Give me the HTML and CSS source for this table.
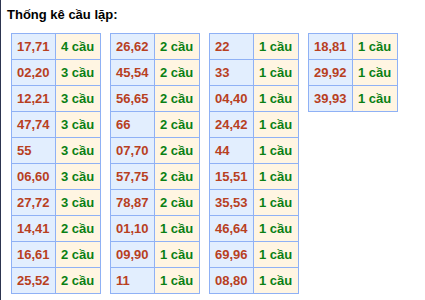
FILE: index.html
```html
<!DOCTYPE html>
<html lang="vi">
<head>
<meta charset="utf-8">
<link rel="stylesheet" href="styles.css">
</head>
<body>
<div class="page">
  <div class="title">Thống kê cầu lặp:</div>
  <div class="tables">
    <table class="stat">
      <tr><td class="num">17,71</td><td class="cnt">4 cầu</td></tr>
      <tr><td class="num">02,20</td><td class="cnt">3 cầu</td></tr>
      <tr><td class="num">12,21</td><td class="cnt">3 cầu</td></tr>
      <tr><td class="num">47,74</td><td class="cnt">3 cầu</td></tr>
      <tr><td class="num">55</td><td class="cnt">3 cầu</td></tr>
      <tr><td class="num">06,60</td><td class="cnt">3 cầu</td></tr>
      <tr><td class="num">27,72</td><td class="cnt">3 cầu</td></tr>
      <tr><td class="num">14,41</td><td class="cnt">2 cầu</td></tr>
      <tr><td class="num">16,61</td><td class="cnt">2 cầu</td></tr>
      <tr><td class="num">25,52</td><td class="cnt">2 cầu</td></tr>
    </table>
    <table class="stat">
      <tr><td class="num">26,62</td><td class="cnt">2 cầu</td></tr>
      <tr><td class="num">45,54</td><td class="cnt">2 cầu</td></tr>
      <tr><td class="num">56,65</td><td class="cnt">2 cầu</td></tr>
      <tr><td class="num">66</td><td class="cnt">2 cầu</td></tr>
      <tr><td class="num">07,70</td><td class="cnt">2 cầu</td></tr>
      <tr><td class="num">57,75</td><td class="cnt">2 cầu</td></tr>
      <tr><td class="num">78,87</td><td class="cnt">2 cầu</td></tr>
      <tr><td class="num">01,10</td><td class="cnt">1 cầu</td></tr>
      <tr><td class="num">09,90</td><td class="cnt">1 cầu</td></tr>
      <tr><td class="num">11</td><td class="cnt">1 cầu</td></tr>
    </table>
    <table class="stat">
      <tr><td class="num">22</td><td class="cnt">1 cầu</td></tr>
      <tr><td class="num">33</td><td class="cnt">1 cầu</td></tr>
      <tr><td class="num">04,40</td><td class="cnt">1 cầu</td></tr>
      <tr><td class="num">24,42</td><td class="cnt">1 cầu</td></tr>
      <tr><td class="num">44</td><td class="cnt">1 cầu</td></tr>
      <tr><td class="num">15,51</td><td class="cnt">1 cầu</td></tr>
      <tr><td class="num">35,53</td><td class="cnt">1 cầu</td></tr>
      <tr><td class="num">46,64</td><td class="cnt">1 cầu</td></tr>
      <tr><td class="num">69,96</td><td class="cnt">1 cầu</td></tr>
      <tr><td class="num">08,80</td><td class="cnt">1 cầu</td></tr>
    </table>
    <table class="stat">
      <tr><td class="num">18,81</td><td class="cnt">1 cầu</td></tr>
      <tr><td class="num">29,92</td><td class="cnt">1 cầu</td></tr>
      <tr><td class="num">39,93</td><td class="cnt">1 cầu</td></tr>
    </table>
  </div>
</div>
</body>
</html>
```
FILE: styles.css
```css
html, body {
  margin: 0;
  padding: 0;
  background: #ffffff;
}
body {
  font-family: "Liberation Sans", Arial, sans-serif;
}
.page {
  border-left: 1px solid #2d3550;
  padding: 7px 0 0 6px;
  min-height: 300px;
  box-sizing: border-box;
}
.title {
  font-size: 13px;
  font-weight: bold;
  color: #000;
  line-height: 16px;
  margin-bottom: 10px;
}
.tables {
  display: flex;
  align-items: flex-start;
  gap: 9px;
  padding-left: 4px;
}
.stat {
  border-collapse: collapse;
  width: 90px;
  table-layout: fixed;
}
.stat td {
  border: 1px solid #8fb1f5;
  height: 26px;
  padding: 0 0 0 5px;
  font-size: 13px;
  font-weight: bold;
  box-sizing: border-box;
  white-space: nowrap;
}
.stat td.num {
  width: 44px;
  background: #e2eefe;
  color: #b8401f;
}
.stat td.cnt {
  background: #fff5e2;
  color: #0a8014;
}
```
